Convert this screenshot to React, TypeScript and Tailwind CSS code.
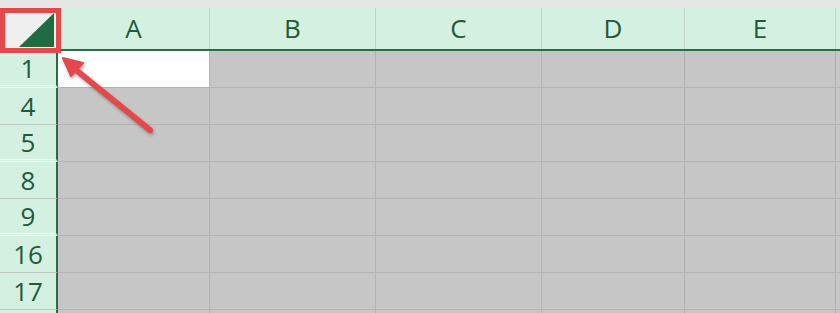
const columns = [
  { label: 'A', width: 'w-[152px]' },
  { label: 'B', width: 'w-[166px]' },
  { label: 'C', width: 'w-[166px]' },
  { label: 'D', width: 'w-[143px]' },
  { label: 'E', width: 'w-[151px]' },
]

// hiddenAfter: rows are hidden below this one, Excel draws a double line
const rows = [
  { num: '1', hiddenAfter: true },
  { num: '4', hiddenAfter: false },
  { num: '5', hiddenAfter: true },
  { num: '8', hiddenAfter: false },
  { num: '9', hiddenAfter: true },
  { num: '16', hiddenAfter: false },
  { num: '17', hiddenAfter: false },
  { num: '', hiddenAfter: false }, // next row, only its top edge shows
]

const font = { fontFamily: '"Open Sans", "Noto Sans", sans-serif' }

export default function App() {
  return (
    <main className="relative w-[840px] h-[313px] overflow-hidden bg-[#e6e6e6] pt-2" style={font}>
      {/* Column header row */}
      <div className="flex h-[43px] border-b-2 border-[#2b6b45]">
        <div className="relative w-[58px] shrink-0 bg-[#f0f0f0] border-r-2 border-[#2b6b45]">
          <svg className="absolute inset-0" width="58" height="41" viewBox="0 0 58 41">
            <polygon points="54,5 54,39 19,39" fill="#1f6b42" />
          </svg>
        </div>
        {columns.map((col) => (
          <div
            key={col.label}
            className={`${col.width} shrink-0 flex items-center justify-center bg-[#d3f0e1] border-r border-[#c3d3ca] text-[26px] text-[#1e5b39]`}
          >
            {col.label}
          </div>
        ))}
        <div className="flex-1 bg-[#d3f0e1]" />
      </div>

      {/* Body rows */}
      {rows.map((row, i) => (
        <div key={i} className="flex">
          <div
            className={
              row.hiddenAfter
                ? 'w-[58px] shrink-0 h-[37px] flex items-center justify-center bg-[#d3f0e1] border-r-2 border-r-[#2b6b45] border-b-[3px] border-double border-b-[#f7f7f7] text-[26px] text-[#1e5b39]'
                : 'w-[58px] shrink-0 h-[37px] flex items-center justify-center bg-[#d3f0e1] border-r-2 border-r-[#2b6b45] border-b border-b-[#bcc9c1] text-[26px] text-[#1e5b39]'
            }
          >
            {row.num}
          </div>
          {columns.map((col, j) => (
            <div
              key={col.label}
              className={`${col.width} shrink-0 h-[37px] border-r border-b border-[#b3b3b3] ${
                i === 0 && j === 0 ? 'bg-white' : 'bg-[#c6c6c6]'
              }`}
            />
          ))}
          <div className="flex-1 h-[37px] bg-[#c6c6c6] border-b border-[#b3b3b3]" />
        </div>
      ))}

      {/* Select-all highlight box */}
      <div className="absolute left-0 top-2 w-[61px] h-[45px] border-[5px] border-[#e5484b]" />

      {/* Pointer arrow */}
      <svg
        className="absolute left-0 top-0 pointer-events-none"
        width="840"
        height="313"
        viewBox="0 0 840 313"
        style={{ filter: 'drop-shadow(1px 2px 1.5px rgba(0,0,0,0.3))' }}
      >
        <line x1="150" y1="130" x2="76" y2="70" stroke="#e5484b" strokeWidth="6" strokeLinecap="round" />
        <polygon points="63,58 83,63 71,76" fill="#e5484b" stroke="#e5484b" strokeWidth="2" strokeLinejoin="round" />
      </svg>
    </main>
  )
}
